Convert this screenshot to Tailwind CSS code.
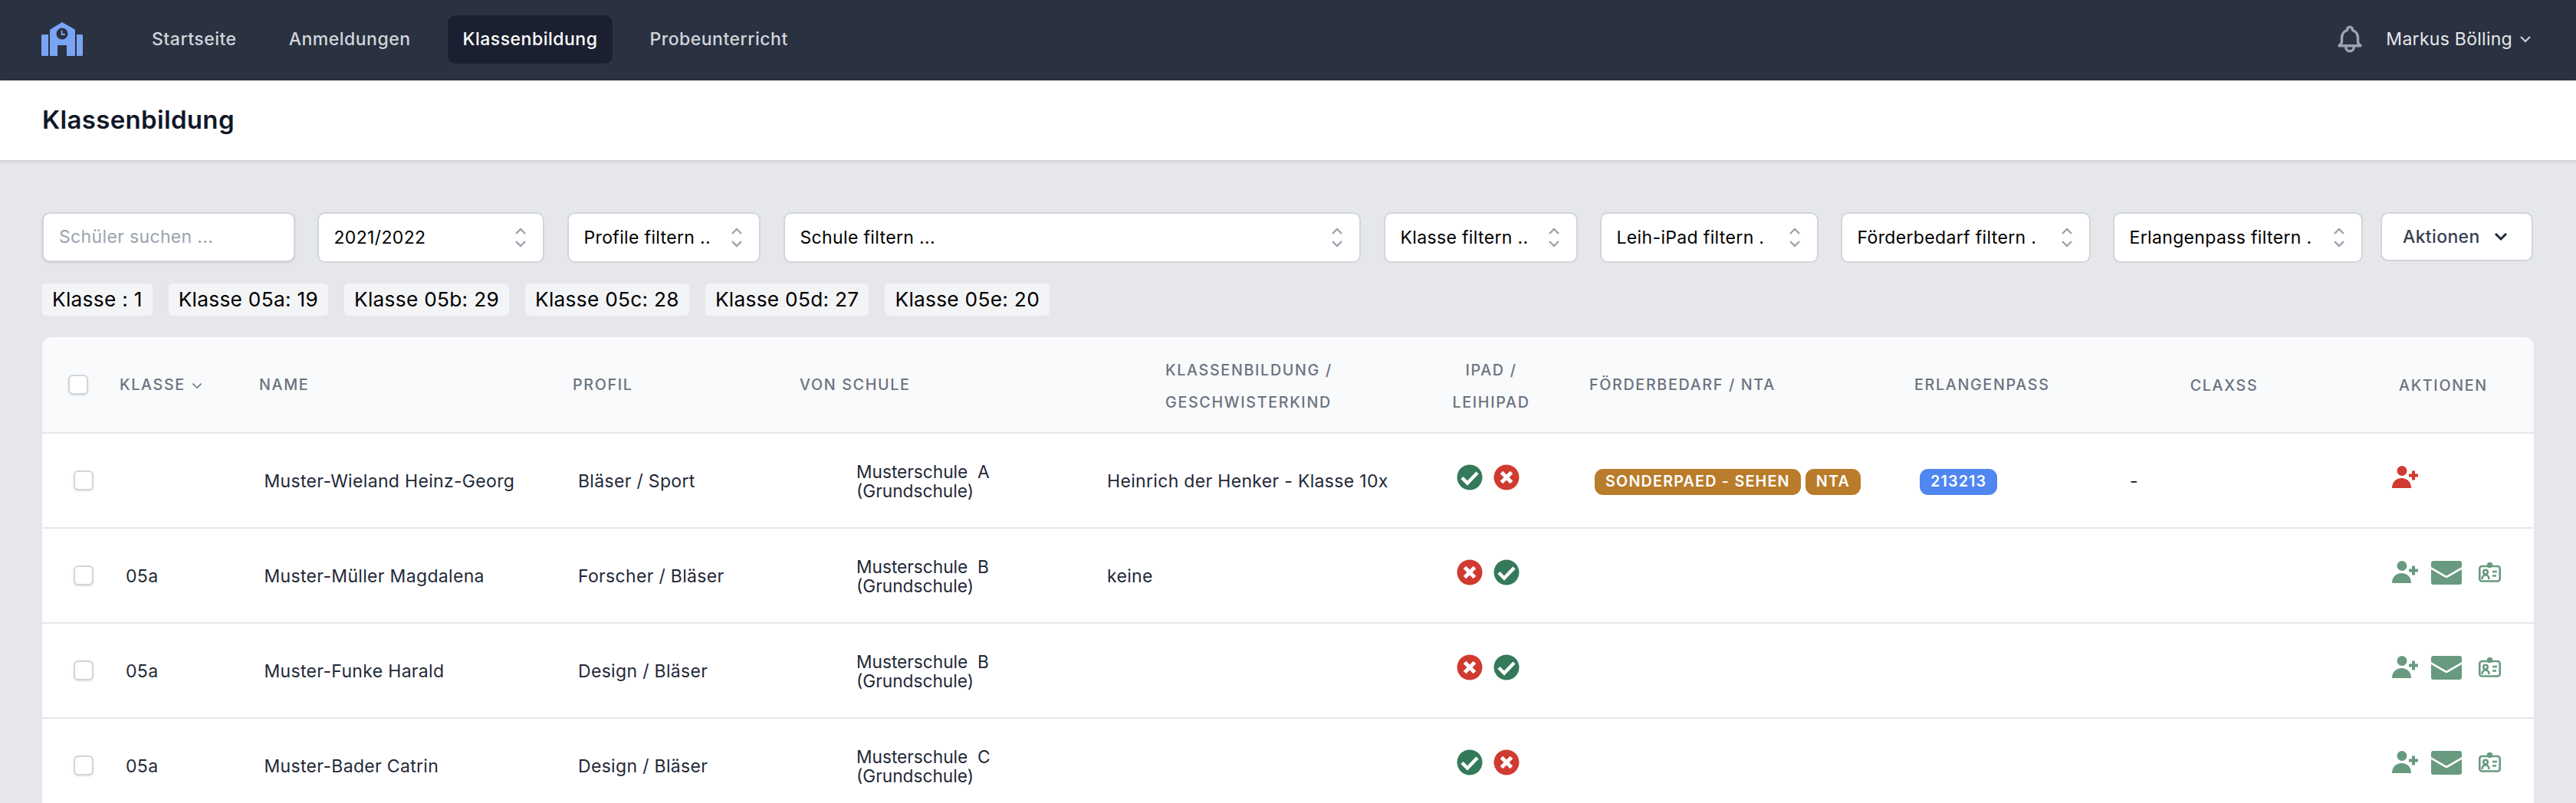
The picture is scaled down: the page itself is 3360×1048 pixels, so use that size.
<!doctype html>
<html lang="de">
<head>
<meta charset="utf-8">
<script src="https://cdn.jsdelivr.net/npm/@tailwindcss/browser@4"></script>
<title>Klassenbildung</title>
</head>
<body class="bg-[#e5e7eb] font-['Inter',sans-serif] overflow-hidden h-[1048px]">
<nav class="h-[105px] bg-[#2a3140] flex items-center pl-[54px] pr-[56px]">
  <svg class="w-[54px] h-[44px] shrink-0 mb-[3px]" viewBox="0 0 54 44"><path fill="#7aa5f5" d="M27 0 L43 9 Q44 10 44 11 V44 H33 V30 H21 V44 H11 V11 Q11 10 12 9 Z"/><path fill="#7aa5f5" d="M1.500 16 H9 V44 H1.500 Q0 44 0 42.500 V17.500 Q0 16 1.500 16Z M46 16 H52.500 Q54 16 54 17.500 V42.500 Q54 44 52.500 44 H46Z"/><circle cx="27" cy="15" r="7.500" fill="#2a3140"/><path d="M26.600 10.500 V16 H31" stroke="#7aa5f5" stroke-width="1.800" fill="none"/></svg>
  <div class="flex gap-[28px] ml-[70px] mb-[3px] text-[23px] font-medium tracking-[0.022em]">
    <a class="h-[63px] flex items-center px-[20px] rounded-[10px] text-[#d1d5db]">Startseite</a>
    <a class="h-[63px] flex items-center px-[20px] rounded-[10px] text-[#d1d5db]">Anmeldungen</a>
    <a class="h-[63px] flex items-center px-[20px] rounded-[10px] text-white bg-[#1a202f]">Klassenbildung</a>
    <a class="h-[63px] flex items-center px-[20px] rounded-[10px] text-[#d1d5db]">Probeunterricht</a>
  </div>
  <div class="ml-auto flex items-center mb-[3px]">
    <svg class="w-[42px] h-[42px] text-[#9ca3af]" viewBox="0 0 24 24" fill="none" stroke="currentColor" stroke-width="2" stroke-linecap="round" stroke-linejoin="round"><path d="M15 17h5l-1.400-1.400A2 2 0 0118 14.200V11a6 6 0 00-4-5.700V5a2 2 0 10-4 0v.3A6 6 0 006 11v3.200c0 .5-.2 1-.6 1.400L4 17h5m6 0v1a3 3 0 11-6 0v-1m6 0H9"/></svg>
    <span class="ml-[26px] text-[23px] font-normal text-[#e5e7eb] tracking-[0.012em]">Markus Bölling</span>
    <svg class="w-[20px] h-[20px] ml-[7px] text-[#d1d5db]" viewBox="0 0 20 20" fill="none" stroke="currentColor" stroke-width="2"><path d="M4 7l6 6 6-6"/></svg>
  </div>
</nav>
<header class="h-[104px] bg-white shadow-[0_2px_4px_rgba(0,0,0,0.12)] flex items-center px-[55px]">
  <h1 class="text-[33px] font-semibold text-[#111827] tracking-[0.01em]">Klassenbildung</h1>
</header>
<main class="px-[55px] pt-[68px]">
  <div class="flex items-start text-[23px] text-black tracking-[0.015em]">
    <div class="w-[330px] h-[65px] bg-white rounded-[10px] border-[2px] border-[#d1d5db] shadow-sm flex items-center pl-[20px] text-[#9ca3af]">Schüler suchen ...</div>
    <div class="ml-[29px] w-[296px] h-[66px] bg-white rounded-[10px] border-[2px] border-[#d1d5db] flex items-center justify-between pl-[19.5px] pr-[20px]">2021/2022<svg class="w-[18px] h-[30px] text-[#9ca3af]" viewBox="0 0 18 30" fill="none" stroke="currentColor" stroke-width="2.400"><path d="M3 10l6-6 6 6M3 20l6 6 6-6"/></svg></div>
    <div class="ml-[30px] w-[252px] h-[66px] bg-white rounded-[10px] border-[2px] border-[#d1d5db] flex items-center justify-between pl-[19.5px] pr-[20px] whitespace-nowrap">Profile filtern ..<svg class="w-[18px] h-[30px] text-[#9ca3af]" viewBox="0 0 18 30" fill="none" stroke="currentColor" stroke-width="2.400"><path d="M3 10l6-6 6 6M3 20l6 6 6-6"/></svg></div>
    <div class="ml-[30px] w-[753px] h-[66px] bg-white rounded-[10px] border-[2px] border-[#d1d5db] flex items-center justify-between pl-[19.5px] pr-[20px]">Schule filtern ...<svg class="w-[18px] h-[30px] text-[#9ca3af]" viewBox="0 0 18 30" fill="none" stroke="currentColor" stroke-width="2.400"><path d="M3 10l6-6 6 6M3 20l6 6 6-6"/></svg></div>
    <div class="ml-[30px] w-[253px] h-[66px] bg-white rounded-[10px] border-[2px] border-[#d1d5db] flex items-center justify-between pl-[19.5px] pr-[20px] whitespace-nowrap">Klasse filtern ..<svg class="w-[18px] h-[30px] text-[#9ca3af]" viewBox="0 0 18 30" fill="none" stroke="currentColor" stroke-width="2.400"><path d="M3 10l6-6 6 6M3 20l6 6 6-6"/></svg></div>
    <div class="ml-[29px] w-[285px] h-[66px] bg-white rounded-[10px] border-[2px] border-[#d1d5db] flex items-center justify-between pl-[19.5px] pr-[20px] whitespace-nowrap">Leih-iPad filtern .<svg class="w-[18px] h-[30px] text-[#9ca3af]" viewBox="0 0 18 30" fill="none" stroke="currentColor" stroke-width="2.400"><path d="M3 10l6-6 6 6M3 20l6 6 6-6"/></svg></div>
    <div class="ml-[29px] w-[326px] h-[66px] bg-white rounded-[10px] border-[2px] border-[#d1d5db] flex items-center justify-between pl-[19.5px] pr-[20px] whitespace-nowrap">Förderbedarf filtern .<svg class="w-[18px] h-[30px] text-[#9ca3af]" viewBox="0 0 18 30" fill="none" stroke="currentColor" stroke-width="2.400"><path d="M3 10l6-6 6 6M3 20l6 6 6-6"/></svg></div>
    <div class="ml-[29px] w-[326px] h-[66px] bg-white rounded-[10px] border-[2px] border-[#d1d5db] flex items-center justify-between pl-[19.5px] pr-[20px] whitespace-nowrap">Erlangenpass filtern .<svg class="w-[18px] h-[30px] text-[#9ca3af]" viewBox="0 0 18 30" fill="none" stroke="currentColor" stroke-width="2.400"><path d="M3 10l6-6 6 6M3 20l6 6 6-6"/></svg></div>
    <div class="ml-[23px] w-[199px] h-[64px] bg-white rounded-[10px] border-[2px] border-[#d1d5db] flex items-center justify-between pl-[27px] pr-[30px] font-medium text-[#374151]">Aktionen<svg class="w-[20px] h-[20px] text-[#1f2937]" viewBox="0 0 20 20" fill="none" stroke="currentColor" stroke-width="3"><path d="M3 6l7 7 7-7"/></svg></div>
  </div>
  <div class="flex gap-[21px] mt-[27px] text-[26.25px] text-black tracking-[0.011em]">
    <span class="h-[42px] px-[13px] flex items-center rounded-[5px] bg-[#f3f4f6]">Klasse : 1</span>
    <span class="h-[42px] px-[13px] flex items-center rounded-[5px] bg-[#f3f4f6]">Klasse 05a: 19</span>
    <span class="h-[42px] px-[13px] flex items-center rounded-[5px] bg-[#f3f4f6]">Klasse 05b: 29</span>
    <span class="h-[42px] px-[13px] flex items-center rounded-[5px] bg-[#f3f4f6]">Klasse 05c: 28</span>
    <span class="h-[42px] px-[13px] flex items-center rounded-[5px] bg-[#f3f4f6]">Klasse 05d: 27</span>
    <span class="h-[42px] px-[13px] flex items-center rounded-[5px] bg-[#f3f4f6]">Klasse 05e: 20</span>
  </div>
  <div class="mt-[28px] w-[3250px] rounded-t-[13px] overflow-hidden bg-white">
    <table class="table-fixed w-full border-collapse">
      <colgroup>
        <col class="w-[101px]"><col class="w-[182px]"><col class="w-[409px]"><col class="w-[296px]"><col class="w-[401px]"><col class="w-[406px]"><col class="w-[223px]"><col class="w-[424px]"><col class="w-[283px]"><col class="w-[270px]"><col class="w-[255px]">
      </colgroup>
      <thead class="bg-[#f9fafb] text-[19.7px] font-medium tracking-[0.085em] text-[#6b7280] uppercase">
        <tr class="h-[125px] border-b-[2px] border-[#e5e7eb]">
          <th class="pl-[34px] text-left font-medium"><span class="block w-[26px] h-[26px] bg-white border-[2px] border-[#d1d5db] rounded-[6px] shadow-sm"></span></th>
          <th class="text-left font-medium pt-[2px]"><span class="inline-flex items-center">Klasse<svg class="w-[16px] h-[16px] ml-[7px]" viewBox="0 0 20 20" fill="none" stroke="currentColor" stroke-width="2"><path d="M3 7l7 7 7-7"/></svg></span></th>
          <th class="text-left font-medium pt-[2px]">Name</th>
          <th class="text-left font-medium pt-[2px]">Profil</th>
          <th class="text-left font-medium pt-[2px]">Von Schule</th>
          <th class="text-center font-medium leading-[42px] pr-[226px] pl-[76px] pt-[3px]"><span class="whitespace-nowrap">Klassenbildung /</span><br><span>Geschwisterkind</span></th>
          <th class="text-center font-medium leading-[42px] pr-[33px] pt-[3px]">iPad /<br>Leihipad</th>
          <th class="text-left font-medium pt-[2px]">Förderbedarf / NTA</th>
          <th class="text-left font-medium pt-[2px]">Erlangenpass</th>
          <th class="text-center font-medium pr-[28px] pt-[4px]">Claxss</th>
          <th class="text-left font-medium pl-[79px] pt-[4px]">Aktionen</th>
        </tr>
      </thead>
      <tbody class="text-[23px] text-[#1f2937] tracking-[0.014em]">
        <tr class="h-[124px] border-b-[2px] border-[#e5e7eb] [&>td]:pt-[2px]">
          <td class="pl-[41px]"><span class="block w-[26px] h-[26px] mb-[2px] bg-white border-[2px] border-[#d1d5db] rounded-[6px] shadow-sm"></span></td>
          <td class="pl-[8px]"></td>
          <td class="pl-[6.5px]">Muster-Wieland Heinz-Georg</td>
          <td class="pl-[7px]">Bläser / Sport</td>
          <td class="pl-[74px] text-[22.7px] leading-[25px] tracking-normal">Musterschule&nbsp; A<br>(Grundschule)</td>
          <td>Heinrich der Henker - Klasse 10x</td>
          <td class="pl-[50px]"><div class="flex gap-[14px] mb-[10px]"><svg class="w-[34px] h-[34px]" viewBox="0 0 34 34"><circle cx="17" cy="17" r="16.500" fill="#34795a"/><path d="M7 17.500l7 7L27 11" stroke="#fff" stroke-width="4.500" fill="none"/></svg><svg class="w-[34px] h-[34px]" viewBox="0 0 34 34"><circle cx="17" cy="17" r="16.500" fill="#d03a30"/><path d="M10.500 10.500l13 13M23.500 10.500l-13 13" stroke="#fff" stroke-width="5" fill="none"/></svg></div></td>
          <td class="pl-[7px]"><span class="inline-flex gap-[6px] align-middle"><span class="h-[34px] px-[14px] flex items-center rounded-[11px] bg-[#b97c2b] text-white text-[19.7px] font-semibold tracking-[0.062em]">SONDERPAED - SEHEN</span><span class="h-[34px] px-[14px] flex items-center rounded-[11px] bg-[#b97c2b] text-white text-[19.7px] font-semibold tracking-[0.062em]">NTA</span></span></td>
          <td class="pl-[7px]"><span class="inline-flex h-[34px] px-[14px] items-center rounded-[11px] bg-[#5086f0] text-white text-[19.7px] font-semibold tracking-[0.06em] align-middle">213213</span></td>
          <td><span class="inline-block -ml-[2px]">-</span></td>
          <td class="pl-[70px]"><div class="flex mb-[10px]"><svg class="w-[34px] h-[30px]" viewBox="0 0 34 30"><g fill="#d03a30"><circle cx="13" cy="6.500" r="6.500"/><path d="M0 29c0-8 5.500-13 12.500-13S25 21 25 29z"/><path d="M22 10.500h4V6.500h4v4h4v4h-4v4h-4v-4h-4z"/></g></svg></div></td>
        </tr>
        <tr class="h-[124px] border-b-[2px] border-[#e5e7eb] [&>td]:pt-[2px]">
          <td class="pl-[41px]"><span class="block w-[26px] h-[26px] mb-[2px] bg-white border-[2px] border-[#d1d5db] rounded-[6px] shadow-sm"></span></td>
          <td class="pl-[8px]">05a</td>
          <td class="pl-[6.5px]">Muster-Müller Magdalena</td>
          <td class="pl-[7px]">Forscher / Bläser</td>
          <td class="pl-[74px] text-[22.7px] leading-[25px] tracking-normal">Musterschule&nbsp; B<br>(Grundschule)</td>
          <td>keine</td>
          <td class="pl-[50px]"><div class="flex gap-[14px] mb-[10px]"><svg class="w-[34px] h-[34px]" viewBox="0 0 34 34"><circle cx="17" cy="17" r="16.500" fill="#d03a30"/><path d="M10.500 10.500l13 13M23.500 10.500l-13 13" stroke="#fff" stroke-width="5" fill="none"/></svg><svg class="w-[34px] h-[34px]" viewBox="0 0 34 34"><circle cx="17" cy="17" r="16.500" fill="#34795a"/><path d="M7 17.500l7 7L27 11" stroke="#fff" stroke-width="4.500" fill="none"/></svg></div></td>
          <td></td><td></td><td></td>
          <td class="pl-[70px]"><div class="flex items-start mb-[10px]"><svg class="w-[34px] h-[30px]" viewBox="0 0 34 30"><g fill="#689a80"><circle cx="13" cy="6.500" r="6.500"/><path d="M0 29c0-8 5.500-13 12.500-13S25 21 25 29z"/><path d="M22 10.500h4V6.500h4v4h4v4h-4v4h-4v-4h-4z"/></g></svg><svg class="w-[40px] h-[31px] ml-[17px]" viewBox="0 0 40 31"><path fill="#689a80" d="M3 0h34a3 3 0 013 3v5L21 19q-1 .6-2 0L0 8V3a3 3 0 013-3zM0 11l18 10.500q2 1 4 0L40 11v17a3 3 0 01-3 3H3a3 3 0 01-3-3z"/></svg><svg class="w-[29px] h-[26px] ml-[22px] mt-[2px]" viewBox="0 0 29 26" fill="none" stroke="#689a80" stroke-width="2.600"><rect x="1.300" y="5" width="26.400" height="19.500" rx="3"/><circle cx="14.500" cy="3.500" r="2.500" fill="#689a80"/><circle cx="9" cy="12.500" r="2.800"/><path d="M4.500 22c0-3.500 2-5.500 4.500-5.500s4.500 2 4.500 5.500M18 12h6M18 17.500h5"/></svg></div></td>
        </tr>
        <tr class="h-[124px] border-b-[2px] border-[#e5e7eb] [&>td]:pt-[2px]">
          <td class="pl-[41px]"><span class="block w-[26px] h-[26px] mb-[2px] bg-white border-[2px] border-[#d1d5db] rounded-[6px] shadow-sm"></span></td>
          <td class="pl-[8px]">05a</td>
          <td class="pl-[6.5px]">Muster-Funke Harald</td>
          <td class="pl-[7px]">Design / Bläser</td>
          <td class="pl-[74px] text-[22.7px] leading-[25px] tracking-normal">Musterschule&nbsp; B<br>(Grundschule)</td>
          <td></td>
          <td class="pl-[50px]"><div class="flex gap-[14px] mb-[10px]"><svg class="w-[34px] h-[34px]" viewBox="0 0 34 34"><circle cx="17" cy="17" r="16.500" fill="#d03a30"/><path d="M10.500 10.500l13 13M23.500 10.500l-13 13" stroke="#fff" stroke-width="5" fill="none"/></svg><svg class="w-[34px] h-[34px]" viewBox="0 0 34 34"><circle cx="17" cy="17" r="16.500" fill="#34795a"/><path d="M7 17.500l7 7L27 11" stroke="#fff" stroke-width="4.500" fill="none"/></svg></div></td>
          <td></td><td></td><td></td>
          <td class="pl-[70px]"><div class="flex items-start mb-[10px]"><svg class="w-[34px] h-[30px]" viewBox="0 0 34 30"><g fill="#689a80"><circle cx="13" cy="6.500" r="6.500"/><path d="M0 29c0-8 5.500-13 12.500-13S25 21 25 29z"/><path d="M22 10.500h4V6.500h4v4h4v4h-4v4h-4v-4h-4z"/></g></svg><svg class="w-[40px] h-[31px] ml-[17px]" viewBox="0 0 40 31"><path fill="#689a80" d="M3 0h34a3 3 0 013 3v5L21 19q-1 .6-2 0L0 8V3a3 3 0 013-3zM0 11l18 10.500q2 1 4 0L40 11v17a3 3 0 01-3 3H3a3 3 0 01-3-3z"/></svg><svg class="w-[29px] h-[26px] ml-[22px] mt-[2px]" viewBox="0 0 29 26" fill="none" stroke="#689a80" stroke-width="2.600"><rect x="1.300" y="5" width="26.400" height="19.500" rx="3"/><circle cx="14.500" cy="3.500" r="2.500" fill="#689a80"/><circle cx="9" cy="12.500" r="2.800"/><path d="M4.500 22c0-3.500 2-5.500 4.500-5.500s4.500 2 4.500 5.500M18 12h6M18 17.500h5"/></svg></div></td>
        </tr>
        <tr class="h-[124px] border-b-[2px] border-[#e5e7eb] [&>td]:pt-[2px]">
          <td class="pl-[41px]"><span class="block w-[26px] h-[26px] mb-[2px] bg-white border-[2px] border-[#d1d5db] rounded-[6px] shadow-sm"></span></td>
          <td class="pl-[8px]">05a</td>
          <td class="pl-[6.5px]">Muster-Bader Catrin</td>
          <td class="pl-[7px]">Design / Bläser</td>
          <td class="pl-[74px] text-[22.7px] leading-[25px] tracking-normal">Musterschule&nbsp; C<br>(Grundschule)</td>
          <td></td>
          <td class="pl-[50px]"><div class="flex gap-[14px] mb-[10px]"><svg class="w-[34px] h-[34px]" viewBox="0 0 34 34"><circle cx="17" cy="17" r="16.500" fill="#34795a"/><path d="M7 17.500l7 7L27 11" stroke="#fff" stroke-width="4.500" fill="none"/></svg><svg class="w-[34px] h-[34px]" viewBox="0 0 34 34"><circle cx="17" cy="17" r="16.500" fill="#d03a30"/><path d="M10.500 10.500l13 13M23.500 10.500l-13 13" stroke="#fff" stroke-width="5" fill="none"/></svg></div></td>
          <td></td><td></td><td></td>
          <td class="pl-[70px]"><div class="flex items-start mb-[10px]"><svg class="w-[34px] h-[30px]" viewBox="0 0 34 30"><g fill="#689a80"><circle cx="13" cy="6.500" r="6.500"/><path d="M0 29c0-8 5.500-13 12.500-13S25 21 25 29z"/><path d="M22 10.500h4V6.500h4v4h4v4h-4v4h-4v-4h-4z"/></g></svg><svg class="w-[40px] h-[31px] ml-[17px]" viewBox="0 0 40 31"><path fill="#689a80" d="M3 0h34a3 3 0 013 3v5L21 19q-1 .6-2 0L0 8V3a3 3 0 013-3zM0 11l18 10.500q2 1 4 0L40 11v17a3 3 0 01-3 3H3a3 3 0 01-3-3z"/></svg><svg class="w-[29px] h-[26px] ml-[22px] mt-[2px]" viewBox="0 0 29 26" fill="none" stroke="#689a80" stroke-width="2.600"><rect x="1.300" y="5" width="26.400" height="19.500" rx="3"/><circle cx="14.500" cy="3.500" r="2.500" fill="#689a80"/><circle cx="9" cy="12.500" r="2.800"/><path d="M4.500 22c0-3.500 2-5.500 4.500-5.500s4.500 2 4.500 5.500M18 12h6M18 17.500h5"/></svg></div></td>
        </tr>
      </tbody>
    </table>
  </div>
</main>
</body>
</html>
